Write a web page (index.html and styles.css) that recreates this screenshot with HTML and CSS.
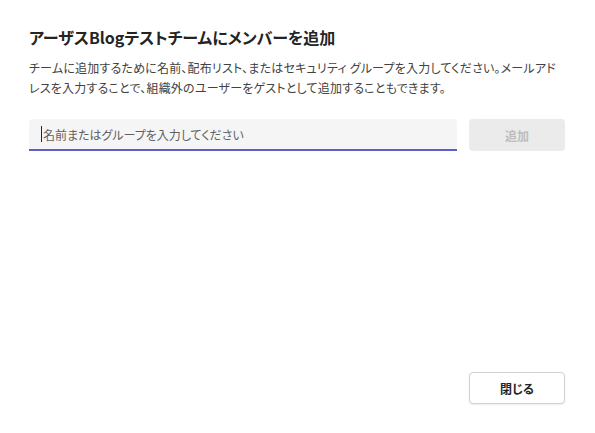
FILE: index.html
```html
<!DOCTYPE html>
<html lang="ja">
<head>
<meta charset="utf-8">
<link rel="stylesheet" href="styles.css">
</head>
<body>
<div class="dialog">
  <h1 class="title">アーザスBlogテストチームにメンバーを追加</h1>
  <p class="desc">チームに追加するために名前、配布リスト、またはセキュリティ グループを入力してください。メールアドレスを入力することで、組織外のユーザーをゲストとして追加することもできます。</p>
  <div class="add-row">
    <div class="field"><span class="caret"></span><span class="placeholder">名前またはグループを入力してください</span></div>
    <button class="btn btn-add" disabled>追加</button>
  </div>
  <div class="footer">
    <button class="btn btn-close">閉じる</button>
  </div>
</div>
</body>
</html>
```
FILE: styles.css
```css
html, body {
  margin: 0;
  padding: 0;
  background: #ffffff;
}
body {
  font-family: "Noto Sans CJK JP", "Noto Sans", sans-serif;
  font-feature-settings: "palt";
  color: #242424;
}
.dialog {
  box-sizing: border-box;
  height: 433px;
  padding: 26px 30px 29px 29px;
  display: flex;
  flex-direction: column;
}
.title {
  margin: 0;
  font-size: 16px;
  line-height: 22px;
  font-weight: 700;
  color: #242424;
}
.desc {
  margin: 10px 0 0;
  font-size: 12px;
  line-height: 20px;
  letter-spacing: 0.2px;
  color: #424242;
  width: 530px;
}
.add-row {
  margin-top: 21px;
  display: flex;
  gap: 12px;
  align-items: flex-start;
}
.field {
  box-sizing: border-box;
  width: 428px;
  height: 32px;
  background: #f5f5f5;
  border-radius: 4px 4px 0 0;
  border-bottom: 2px solid #5b5fc7;
  display: flex;
  align-items: center;
  padding-left: 12px;
  font-size: 12px;
}
.caret {
  width: 1px;
  height: 16px;
  background: #242424;
}
.placeholder {
  color: #616161;
  margin-left: 1px;
}
.btn {
  box-sizing: border-box;
  width: 96px;
  height: 32px;
  border-radius: 4px;
  font-family: inherit;
  font-feature-settings: "palt";
  font-size: 12px;
  font-weight: 700;
  padding: 0;
}
.btn-add {
  background: #ebebeb;
  border: none;
  color: #bdbdbd;
}
.footer {
  margin-top: auto;
  display: flex;
  justify-content: flex-end;
}
.btn-close {
  background: #ffffff;
  border: 1px solid #d1d1d1;
  color: #242424;
  box-shadow: 0 1px 2px rgba(0,0,0,0.08);
}
```
